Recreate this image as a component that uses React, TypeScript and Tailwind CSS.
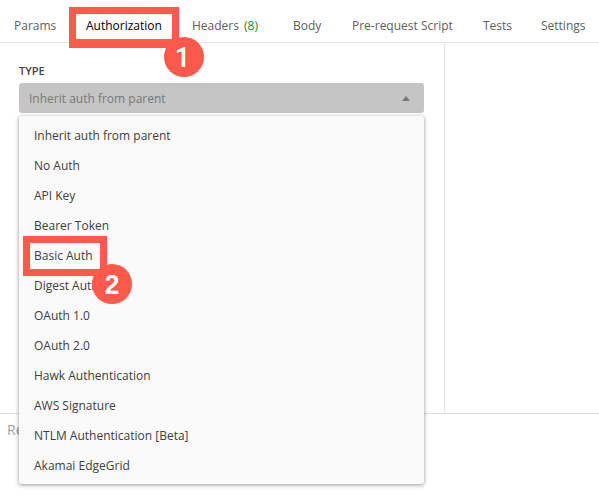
const authTypes = [
  'Inherit auth from parent',
  'No Auth',
  'API Key',
  'Bearer Token',
  'Basic Auth',
  'Digest Auth',
  'OAuth 1.0',
  'OAuth 2.0',
  'Hawk Authentication',
  'AWS Signature',
  'NTLM Authentication [Beta]',
  'Akamai EdgeGrid',
];

const tabs = [
  { label: 'Params', width: 'w-[72px]' },
  { label: 'Authorization', width: 'w-[106px]', active: true },
  { label: 'Headers', width: 'w-[101px]', count: 8 },
  { label: 'Body', width: 'w-[59px]' },
  { label: 'Pre-request Script', width: 'w-[131px]' },
  { label: 'Tests', width: 'w-[58px]' },
  { label: 'Settings', width: 'w-[58px]' },
];

function Badge({ value, place }: { value: number; place: string }) {
  return (
    <span
      className={`absolute z-20 flex size-10 items-center justify-center rounded-full bg-[#ff594c] text-[27px] leading-none text-white ${place}`}
    >
      {value}
    </span>
  );
}

function Tabs() {
  return (
    <nav className="flex h-[43px] border-b border-[#e6e6e6] pl-3.5 text-[#606060]">
      {tabs.map((tab) => (
        <div key={tab.label} className={`relative flex h-[42px] shrink-0 pt-[18px] leading-4 whitespace-nowrap ${tab.width}`}>
          <span className={tab.active ? 'text-black' : ''}>{tab.label}</span>
          {tab.count && <span className="ml-[5px] text-[#0e8f3a]">({tab.count})</span>}
          {tab.active && (
            <>
              <span className="absolute top-[39px] -left-2.5 z-20 h-0.5 w-24 bg-[#f2693a]" />
              <span className="absolute top-[7px] -left-[17px] z-10 h-[41px] w-[110px] border-[7px] border-[#ff594c]" />
              <Badge value={1} place="left-[78px] top-[37px] pr-[3px] pt-[3px] font-['Roboto',sans-serif] font-semibold" />
            </>
          )}
        </div>
      ))}
    </nav>
  );
}

function AuthMenu() {
  return (
    <ul className="absolute top-[33px] left-0 z-10 h-[368px] w-[405px] rounded-[3px] bg-[#fafafa] py-1 text-[#404040] shadow-[0_1px_4px_rgba(0,0,0,0.42)]">
      {authTypes.map((type) => (
        <li key={type} className="relative flex h-[30px] items-center pt-0.5 pl-[15px]">
          {type}
          {type === 'Basic Auth' && (
            <>
              <span className="absolute top-0 left-1 z-10 h-10 w-[84px] -translate-y-1 border-[7px] border-[#ff594c]" />
              <Badge value={2} place="left-[73px] top-6 pt-0.5 font-['Liberation_Sans',sans-serif] font-bold" />
            </>
          )}
        </li>
      ))}
    </ul>
  );
}

export default function App() {
  return (
    <div className="flex h-[495px] w-[599px] flex-col overflow-hidden bg-white font-['Open_Sans',sans-serif] text-xs">
      <Tabs />
      <main className="flex h-[371px] border-b border-[#dedede]">
        <section className="w-[445px] border-r border-[#e6e6e6] pt-5 pl-[19px]">
          <h2 className="h-5 text-[11px] leading-4 font-semibold text-[#454545]">TYPE</h2>
          <div className="relative w-[405px]">
            <div className="flex h-[30px] items-center justify-between rounded-[3px] bg-[#c5c5c5] pr-3.5 pl-2.5 text-[#787878]">
              <span className="pt-0.5">Inherit auth from parent</span>
              <svg className="h-[5px] w-2" viewBox="0 0 8 5" fill="#787878">
                <path d="M4 0 8 5H0Z" />
              </svg>
            </div>
            <AuthMenu />
          </div>
        </section>
      </main>
      <footer className="flex-1 pt-1.5 pl-[7px] text-sm leading-5 text-[#a0a0a0]">Re</footer>
    </div>
  );
}
